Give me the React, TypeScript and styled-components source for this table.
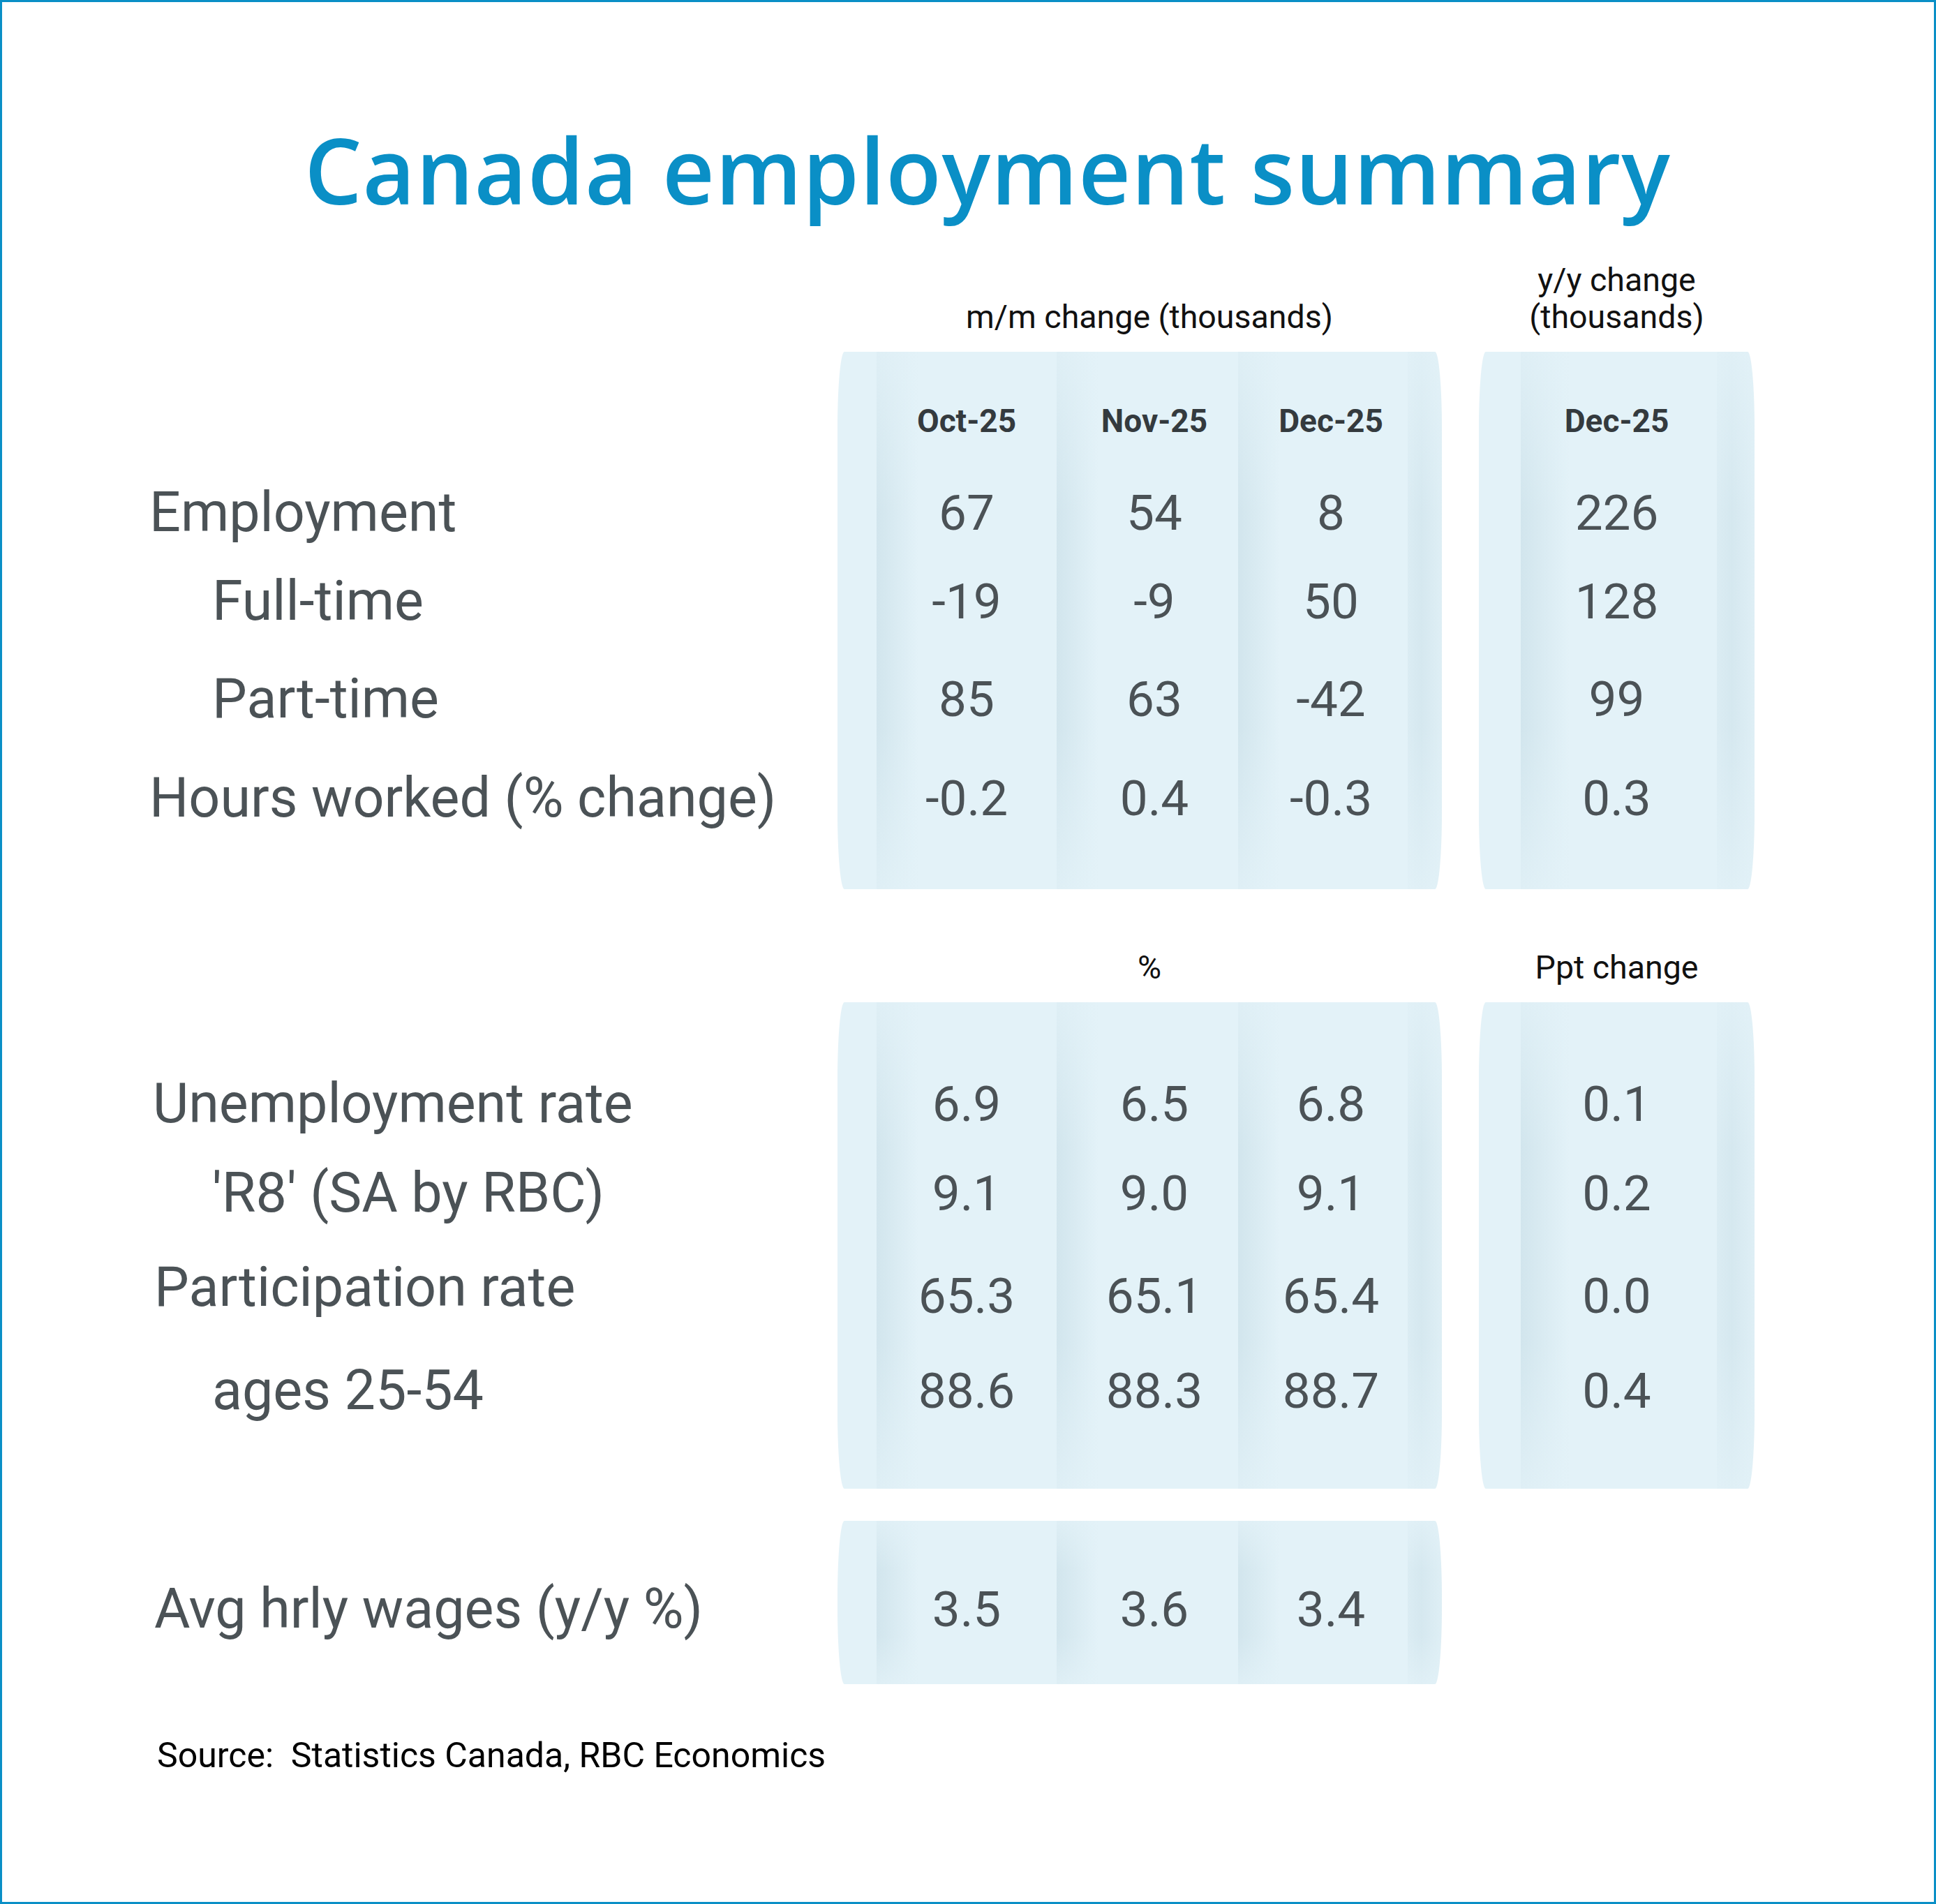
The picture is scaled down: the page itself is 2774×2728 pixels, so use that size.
import React from "react";
import styled, { createGlobalStyle } from "styled-components";

const GlobalStyle = createGlobalStyle`
  html, body {
    margin: 0;
    padding: 0;
    background: #fff;
  }
  body {
    font-family: Roboto, "Liberation Sans", sans-serif;
  }
`;

const BASE = "#e3f2f8";

// a soft fold shadow that starts at x and fades to the right
const band = (x: number, w = 60) =>
  `linear-gradient(90deg, transparent ${x}px, rgba(170, 200, 212, 0.3) ${x}px, rgba(170, 200, 212, 0.2) ${
    x + w * 0.35
  }px, transparent ${x + w}px)`;

const edgeBand = (x: number, w: number) =>
  `linear-gradient(90deg, transparent ${x}px, rgba(170, 200, 212, 0.14) ${x}px, rgba(170, 200, 212, 0.24) ${
    x + w * 0.4
  }px, rgba(170, 200, 212, 0.08) ${x + w}px)`;

const fade = `linear-gradient(180deg, rgba(227, 242, 248, 0.75) 0%, rgba(227, 242, 248, 0) 30%, rgba(227, 242, 248, 0) 70%, rgba(227, 242, 248, 0.75) 100%)`;

const Page = styled.div`
  box-sizing: border-box;
  width: 2774px;
  height: 2728px;
  border: 3px solid #0a8fc6;
  background: #fff;
  display: flex;
  flex-direction: column;
`;

const Title = styled.h1`
  margin: 162px 0 0;
  padding-left: 56px;
  text-align: center;
  font-family: "Open Sans", "Noto Sans", sans-serif;
  font-weight: 600;
  font-size: 130px;
  line-height: 156px;
  color: #0a8fc6;
  letter-spacing: 1px;
`;

const Section = styled.div<{ $rows: string; $top: number }>`
  display: grid;
  grid-template-columns: 986px 55px 260px 278px 228px 45px 53px 60px 275px 60px;
  grid-template-rows: ${({ $rows }) => $rows};
  margin-top: ${({ $top }) => $top}px;
  padding-left: 211px;
`;

const Panel = styled.div<{ $kind: "mm" | "yy"; $rows: string }>`
  grid-row: ${({ $rows }) => $rows};
  grid-column: ${({ $kind }) => ($kind === "mm" ? "2 / 7" : "8 / 11")};
  border-radius: 10px / 110px;
  background-color: ${BASE};
  background-image: ${({ $kind }) =>
    $kind === "mm"
      ? [fade, band(56), band(314), band(574), edgeBand(817, 49)].join(", ")
      : [fade, band(60, 70), edgeBand(341, 54)].join(", ")};
`;

const GroupHeading = styled.div<{ $kind: "mm" | "yy" }>`
  grid-row: 1;
  grid-column: ${({ $kind }) => ($kind === "mm" ? "3 / 6" : "8 / 11")};
  align-self: end;
  padding-bottom: 23px;
  padding-left: ${({ $kind }) => ($kind === "mm" ? 18 : 0)}px;
  text-align: center;
  font-size: 46.5px;
  line-height: 53px;
  color: #111;
`;

const ColHead = styled.div<{ $col: number; $row: number }>`
  grid-row: ${({ $row }) => $row};
  grid-column: ${({ $col }) => $col};
  align-self: center;
  text-align: center;
  font-weight: 700;
  font-size: 46px;
  line-height: 1;
  color: #343a3e;
`;

const Label = styled.div<{ $indent: number; $row: number; $shift: number }>`
  grid-row: ${({ $row }) => $row};
  grid-column: 1;
  align-self: center;
  padding-left: ${({ $indent }) => $indent}px;
  margin-top: ${({ $shift }) => $shift * 2}px;
  font-size: 79px;
  line-height: 1;
  color: #4b5256;
  white-space: nowrap;
`;

const Value = styled.div<{ $col: number; $row: number }>`
  grid-row: ${({ $row }) => $row};
  grid-column: ${({ $col }) => $col};
  align-self: center;
  text-align: center;
  font-size: 71px;
  line-height: 1;
  color: #4b5256;
`;

const Source = styled.div`
  margin-top: 74px;
  padding-left: 222px;
  font-size: 50px;
  line-height: 56px;
  color: #000;
  white-space: pre;
`;

type Row = {
  label: string;
  indent: number;
  mm: string[];
  yy?: string;
  shift?: number;
};

const employment: Row[] = [
  { label: "Employment", indent: 0, mm: ["67", "54", "8"], yy: "226" },
  { label: "Full-time", indent: 90, mm: ["-19", "-9", "50"], yy: "128" },
  { label: "Part-time", indent: 90, mm: ["85", "63", "-42"], yy: "99" },
  { label: "Hours worked (% change)", indent: 0, mm: ["-0.2", "0.4", "-0.3"], yy: "0.3" },
];

const rates: Row[] = [
  { label: "Unemployment rate", indent: 5, mm: ["6.9", "6.5", "6.8"], yy: "0.1" },
  { label: "'R8' (SA by RBC)", indent: 90, mm: ["9.1", "9.0", "9.1"], yy: "0.2" },
  { label: "Participation rate", indent: 7, mm: ["65.3", "65.1", "65.4"], yy: "0.0", shift: -12 },
  { label: "ages 25-54", indent: 90, mm: ["88.6", "88.3", "88.7"], yy: "0.4" },
];

const wages: Row[] = [
  { label: "Avg hrly wages (y/y %)", indent: 7, mm: ["3.5", "3.6", "3.4"] },
];

const renderRows = (rows: Row[], firstRow: number) =>
  rows.map((r, i) => (
    <React.Fragment key={r.label}>
      <Label $row={firstRow + i} $indent={r.indent} $shift={r.shift ?? 0}>
        {r.label}
      </Label>
      {r.mm.map((v, j) => (
        <Value key={j} $row={firstRow + i} $col={3 + j}>
          {v}
        </Value>
      ))}
      {r.yy && (
        <Value $row={firstRow + i} $col={9}>
          {r.yy}
        </Value>
      )}
    </React.Fragment>
  ));

const App: React.FC = () => {
  return (
    <>
      <GlobalStyle />
      <Page>
        <Title>Canada employment summary</Title>

        <Section $top={49} $rows="134px 41px 116px 146px 108px 172px 112px 75px">
          <Panel $kind="mm" $rows="2 / 9" />
          <Panel $kind="yy" $rows="2 / 9" />
          <GroupHeading $kind="mm">m/m change (thousands)</GroupHeading>
          <GroupHeading $kind="yy">
            y/y change
            <br />
            (thousands)
          </GroupHeading>
          <ColHead $row={3} $col={3}>Oct-25</ColHead>
          <ColHead $row={3} $col={4}>Nov-25</ColHead>
          <ColHead $row={3} $col={5}>Dec-25</ColHead>
          <ColHead $row={3} $col={9}>Dec-25</ColHead>
          {renderRows(employment, 4)}
        </Section>

        <Section $top={0} $rows="162px 90px 110px 146px 148px 124px 79px">
          <Panel $kind="mm" $rows="2 / 8" />
          <Panel $kind="yy" $rows="2 / 8" />
          <GroupHeading $kind="mm">%</GroupHeading>
          <GroupHeading $kind="yy">Ppt change</GroupHeading>
          {renderRows(rates, 3)}
        </Section>

        <Section $top={46} $rows="70px 112px 52px">
          <Panel $kind="mm" $rows="1 / 4" />
          {renderRows(wages, 2)}
        </Section>

        <Source>Source:  Statistics Canada, RBC Economics</Source>
      </Page>
    </>
  );
};

export default App;
